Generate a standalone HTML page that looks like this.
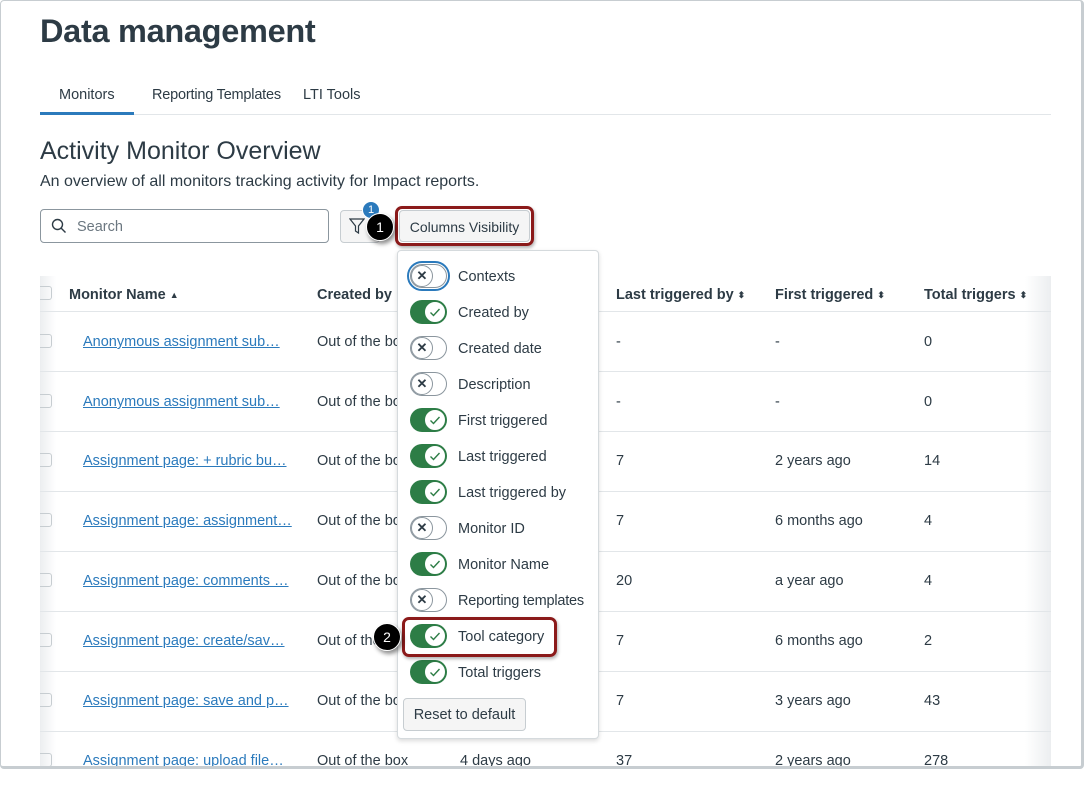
<!DOCTYPE html>
<html><head><style>
*{box-sizing:border-box;margin:0;padding:0}
body{width:1084px;height:769px;overflow:hidden;background:#fff;font-family:"Liberation Sans",sans-serif;color:#2d3b45;position:relative}
.frame{position:absolute;inset:0;border:1px solid #c7cdd1;border-right:3px solid #c7cdd1;border-bottom:3px solid #c7cdd1;border-radius:4px;pointer-events:none;z-index:50}
.abs{position:absolute}
h1{position:absolute;left:40px;top:13px;font-size:32.5px;font-weight:bold;letter-spacing:-.3px}
.tab{position:absolute;top:87px;font-size:14.5px}
.sort{font-size:9px;vertical-align:1px}
.row{position:absolute;left:40px;width:1011px;height:60px;border-top:1px solid #e2e6e9}
.cell{position:absolute;font-size:14.5px;margin-top:2px}
a{color:#2b7abc;text-decoration:underline}
.cb{position:absolute;left:40px;width:12px;height:14px;border:1px solid #c7cdd1;border-left:none;border-radius:0 3px 3px 0}
.tg{position:absolute;left:410px;width:37px;height:24px;border-radius:12px}
.tg.on{background:#2d7d46}
.tg.off{background:#fff;border:1px solid #8b969e}
.tg .k{position:absolute;top:1px;width:22px;height:22px;border-radius:50%;background:#fff;display:flex;align-items:center;justify-content:center;font-size:12px}
.tg.on .k{right:1px;border:1px solid #2d7d46}
.tg.off .k{left:0px;top:0px;border:1px solid #8b969e;font-weight:bold;font-size:13px;color:#2d3b45}
.lb{position:absolute;left:458px;font-size:14.5px;margin-top:2px}
.badge{position:absolute;width:28px;height:28px;border-radius:50%;background:#000;color:#fff;font-size:14px;display:flex;align-items:center;justify-content:center;box-shadow:2px 3px 4px rgba(0,0,0,.45);border:1.5px solid #fff;z-index:20}
</style></head><body>
<div class="frame"></div>
<h1>Data management</h1>
<div class="tab" style="left:59px">Monitors</div>
<div class="tab" style="left:152px;letter-spacing:-.2px">Reporting Templates</div>
<div class="tab" style="left:303px">LTI Tools</div>
<div class="abs" style="left:40px;top:114px;width:1011px;height:1px;background:#e2e6e9"></div>
<div class="abs" style="left:40px;top:112px;width:94px;height:3px;background:#2b7abc"></div>
<div class="abs" style="left:40px;top:137px;font-size:25px">Activity Monitor Overview</div>
<div class="abs" style="left:40px;top:173px;font-size:16px">An overview of all monitors tracking activity for Impact reports.</div>
<div class="abs" style="left:40px;top:209px;width:289px;height:34px;border:1px solid #8b969e;border-radius:4px"></div>
<svg class="abs" style="left:51px;top:218px" width="16" height="16" viewBox="0 0 16 16"><circle cx="6.5" cy="6.5" r="5" fill="none" stroke="#2d3b45" stroke-width="1.4"/><path d="M10 10l4.5 4.5" stroke="#2d3b45" stroke-width="1.4"/></svg>
<div class="abs" style="left:77px;top:219px;font-size:14.5px;color:#6b7780">Search</div>
<div class="abs" style="left:340px;top:210px;width:40px;height:33px;border:1px solid #c7cdd1;border-radius:4px;background:#f5f5f5"></div>
<svg class="abs" style="left:349px;top:218px" width="16" height="17" viewBox="0 0 16 17"><path d="M1 1h14l-5.5 7v7l-3-2v-5z" fill="none" stroke="#2d3b45" stroke-width="1.2"/></svg>
<div class="abs" style="left:362px;top:201px;width:18px;height:18px;border-radius:50%;background:#2b7abc;color:#fff;font-size:11px;text-align:center;line-height:16px;border:1px solid #fff">1</div>
<div class="abs" style="left:395px;top:206px;width:139px;height:40px;border:3px solid #8b1a1a;border-radius:7px;box-shadow:1px 2px 3px rgba(0,0,0,.3)"></div>
<div class="abs" style="left:399px;top:210px;width:131px;height:32px;border:1px solid #c7cdd1;border-radius:4px;background:#f5f5f5;font-size:14px;text-align:center;line-height:32px">Columns Visibility</div>
<div class="badge" style="left:366px;top:213px">1</div>

<div class="abs" style="left:40px;top:276px;width:1011px;height:493px;background:#fff"></div>
<div class="abs" style="left:40px;top:276px;width:16px;height:493px;background:linear-gradient(90deg,#eceef0,#fff)"></div>
<div class="abs" style="left:1025px;top:276px;width:26px;height:493px;background:linear-gradient(90deg,#fff,#eceef0)"></div>
<div class="cb" style="top:286px"></div>
<div class="cell" style="left:69px;top:285px;font-weight:bold">Monitor Name <span class="sort">▲</span></div>
<div class="cell" style="left:317px;top:285px;font-weight:bold">Created by <span class="sort">⬍</span></div>
<div class="cell" style="left:616px;top:285px;font-weight:bold">Last triggered by <span class="sort">⬍</span></div>
<div class="cell" style="left:775px;top:285px;font-weight:bold">First triggered <span class="sort">⬍</span></div>
<div class="cell" style="left:924px;top:285px;font-weight:bold">Total triggers <span class="sort">⬍</span></div>

<div class="row" style="top:311px"></div><div class="row" style="top:371px"></div><div class="row" style="top:431px"></div><div class="row" style="top:491px"></div><div class="row" style="top:551px"></div><div class="row" style="top:611px"></div><div class="row" style="top:671px"></div><div class="row" style="top:731px"></div>

<div class="cb" style="top:334px"></div><div class="cell" style="left:83px;top:332px"><a>Anonymous assignment sub…</a></div><div class="cell" style="left:317px;top:332px">Out of the box</div><div class="cell" style="left:616px;top:332px">-</div><div class="cell" style="left:775px;top:332px">-</div><div class="cell" style="left:924px;top:332px">0</div>
<div class="cb" style="top:394px"></div><div class="cell" style="left:83px;top:392px"><a>Anonymous assignment sub…</a></div><div class="cell" style="left:317px;top:392px">Out of the box</div><div class="cell" style="left:616px;top:392px">-</div><div class="cell" style="left:775px;top:392px">-</div><div class="cell" style="left:924px;top:392px">0</div>
<div class="cb" style="top:453px"></div><div class="cell" style="left:83px;top:451px"><a>Assignment page: + rubric bu…</a></div><div class="cell" style="left:317px;top:451px">Out of the box</div><div class="cell" style="left:616px;top:451px">7</div><div class="cell" style="left:775px;top:451px">2 years ago</div><div class="cell" style="left:924px;top:451px">14</div>
<div class="cb" style="top:513px"></div><div class="cell" style="left:83px;top:511px"><a>Assignment page: assignment…</a></div><div class="cell" style="left:317px;top:511px">Out of the box</div><div class="cell" style="left:616px;top:511px">7</div><div class="cell" style="left:775px;top:511px">6 months ago</div><div class="cell" style="left:924px;top:511px">4</div>
<div class="cb" style="top:573px"></div><div class="cell" style="left:83px;top:571px"><a>Assignment page: comments …</a></div><div class="cell" style="left:317px;top:571px">Out of the box</div><div class="cell" style="left:616px;top:571px">20</div><div class="cell" style="left:775px;top:571px">a year ago</div><div class="cell" style="left:924px;top:571px">4</div>
<div class="cb" style="top:633px"></div><div class="cell" style="left:83px;top:631px"><a>Assignment page: create/sav…</a></div><div class="cell" style="left:317px;top:631px">Out of the box</div><div class="cell" style="left:616px;top:631px">7</div><div class="cell" style="left:775px;top:631px">6 months ago</div><div class="cell" style="left:924px;top:631px">2</div>
<div class="cb" style="top:693px"></div><div class="cell" style="left:83px;top:691px"><a>Assignment page: save and p…</a></div><div class="cell" style="left:317px;top:691px">Out of the box</div><div class="cell" style="left:616px;top:691px">7</div><div class="cell" style="left:775px;top:691px">3 years ago</div><div class="cell" style="left:924px;top:691px">43</div>
<div class="cb" style="top:753px"></div><div class="cell" style="left:83px;top:751px"><a>Assignment page: upload file…</a></div><div class="cell" style="left:317px;top:751px">Out of the box</div><div class="cell" style="left:460px;top:751px">4 days ago</div><div class="cell" style="left:616px;top:751px">37</div><div class="cell" style="left:775px;top:751px">2 years ago</div><div class="cell" style="left:924px;top:751px">278</div>

<div class="abs" style="left:397px;top:250px;width:202px;height:489px;background:#fff;border:1px solid #d5dadd;border-radius:4px;box-shadow:0 2px 5px rgba(0,0,0,.15);z-index:5"></div>
<div style="position:absolute;inset:0;z-index:6">
<div class="abs" style="left:407px;top:261px;width:43px;height:30px;border:2px solid #2b7abc;border-radius:15px"></div>
<div class="tg off" style="top:264px"><div class="k">✕</div></div><div class="lb" style="top:267px">Contexts</div>
<div class="tg on" style="top:300px"><div class="k"><svg width="14" height="14" viewBox="0 0 14 14"><path d="M2.5 7.5l3 3 6-6.5" fill="none" stroke="#2d7d46" stroke-width="1.4"/></svg></div></div><div class="lb" style="top:303px">Created by</div>
<div class="tg off" style="top:336px"><div class="k">✕</div></div><div class="lb" style="top:339px">Created date</div>
<div class="tg off" style="top:372px"><div class="k">✕</div></div><div class="lb" style="top:375px">Description</div>
<div class="tg on" style="top:408px"><div class="k"><svg width="14" height="14" viewBox="0 0 14 14"><path d="M2.5 7.5l3 3 6-6.5" fill="none" stroke="#2d7d46" stroke-width="1.4"/></svg></div></div><div class="lb" style="top:411px">First triggered</div>
<div class="tg on" style="top:444px"><div class="k"><svg width="14" height="14" viewBox="0 0 14 14"><path d="M2.5 7.5l3 3 6-6.5" fill="none" stroke="#2d7d46" stroke-width="1.4"/></svg></div></div><div class="lb" style="top:447px">Last triggered</div>
<div class="tg on" style="top:480px"><div class="k"><svg width="14" height="14" viewBox="0 0 14 14"><path d="M2.5 7.5l3 3 6-6.5" fill="none" stroke="#2d7d46" stroke-width="1.4"/></svg></div></div><div class="lb" style="top:483px">Last triggered by</div>
<div class="tg off" style="top:516px"><div class="k">✕</div></div><div class="lb" style="top:519px">Monitor ID</div>
<div class="tg on" style="top:552px"><div class="k"><svg width="14" height="14" viewBox="0 0 14 14"><path d="M2.5 7.5l3 3 6-6.5" fill="none" stroke="#2d7d46" stroke-width="1.4"/></svg></div></div><div class="lb" style="top:555px">Monitor Name</div>
<div class="tg off" style="top:588px"><div class="k">✕</div></div><div class="lb" style="top:591px;letter-spacing:-.2px">Reporting templates</div>
<div class="tg on" style="top:624px"><div class="k"><svg width="14" height="14" viewBox="0 0 14 14"><path d="M2.5 7.5l3 3 6-6.5" fill="none" stroke="#2d7d46" stroke-width="1.4"/></svg></div></div><div class="lb" style="top:627px">Tool category</div>
<div class="tg on" style="top:660px"><div class="k"><svg width="14" height="14" viewBox="0 0 14 14"><path d="M2.5 7.5l3 3 6-6.5" fill="none" stroke="#2d7d46" stroke-width="1.4"/></svg></div></div><div class="lb" style="top:663px">Total triggers</div>
<div class="abs" style="left:403px;top:698px;width:123px;height:33px;border:1px solid #c7cdd1;border-radius:4px;background:#f5f5f5;font-size:14.5px;text-align:center;line-height:33px">Reset to default</div>
<div class="abs" style="left:402px;top:617px;width:155px;height:40px;border:3px solid #8b1a1a;border-radius:7px;box-shadow:1px 2px 3px rgba(0,0,0,.3)"></div>
<div class="badge" style="left:373px;top:623px">2</div>
</div>
</body></html>
